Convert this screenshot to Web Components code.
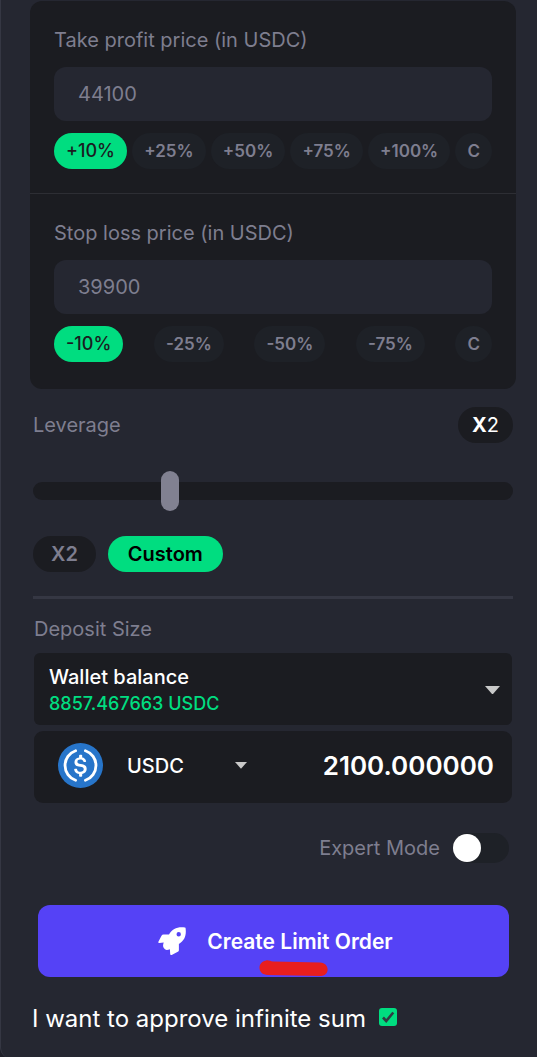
<!DOCTYPE html>
<html lang="en">
<head>
<meta charset="utf-8">
<meta name="viewport" content="width=device-width, initial-scale=1">
<title>Create Limit Order</title>
<style>
  html { background: #1f2029; }
  body {
    margin: 0;
    font-family: Inter, "Liberation Sans", sans-serif;
    font-size: 20px;
    color: #fff;
    --panel: #252731;
    --card: #1b1c21;
    --chip: #1e2127;
    --muted: #7e7e8f;
    --line: #353743;
    --green: #00dd80;
    --accent: #5542f6;
  }
</style>
</head>
<body>
<order-panel></order-panel>

<script>
const define = (name, html, setup) => {
  const template = document.createElement('template');
  template.innerHTML = '<style>*{box-sizing:border-box}button,input,select{font:inherit;color:inherit;margin:0;border:0;background:none}</style>' + html;
  customElements.define(name, class extends HTMLElement {
    constructor() {
      super();
      this.attachShadow({ mode: 'open' }).append(template.content.cloneNode(true));
    }
    connectedCallback() {
      if (setup) setup(this.shadowRoot, this);
    }
  });
};

define('chip-button', `
<style>
  :host { display: block; }
  button {
    display: block; height: 36px; padding: 0 12px; border-radius: 18px;
    background: var(--chip); color: var(--muted);
    font-size: 17px; line-height: 36px; font-weight: 600; white-space: nowrap; cursor: pointer;
  }
  :host([active]) button { background: var(--green); color: #1b1c21; font-size: 18px; font-weight: 500; }
  :host([large]) button { padding: 0 18px; font-size: 20px; font-weight: 600; background: var(--card); }
  :host([large][active]) button { padding: 0 20px; color: #000; background: var(--green); }
</style>
<button type="button"><slot></slot></button>`);

define('price-field', `
<style>
  :host { display: flex; flex-direction: column; gap: 12px; padding: 24px; }
  label { line-height: 30px; color: var(--muted); }
  input {
    width: 100%; height: 54px; padding: 0 24px; border-radius: 12px;
    background: var(--panel); color: var(--muted);
  }
  .chips { display: flex; justify-content: space-between; }
</style>
<label for="price"></label>
<input id="price" type="text" inputmode="decimal">
<div class="chips"><slot></slot></div>`, (root, host) => {
  root.querySelector('label').textContent = host.getAttribute('label');
  root.querySelector('input').value = host.getAttribute('value');
});

define('leverage-control', `
<style>
  :host { display: block; padding: 18px 3px 24px; }
  .head { display: flex; align-items: center; justify-content: space-between; }
  label { color: var(--muted); }
  output { height: 36px; padding: 0 14px; border-radius: 18px; background: var(--card); line-height: 36px; }
  b { font-weight: 700; }
  input {
    appearance: none; display: block; width: 100%; height: 40px; margin: 28px 0 25px; cursor: pointer;
  }
  input::-webkit-slider-runnable-track { height: 18px; border-radius: 9px; background: var(--card); }
  input::-webkit-slider-thumb {
    appearance: none; width: 18px; height: 40px; margin-top: -11px; border-radius: 9px; background: #818191;
  }
  .chips { display: flex; gap: 12px; }
</style>
<div class="head"><label for="lev">Leverage</label><output for="lev"><b>X</b>2</output></div>
<input id="lev" type="range" min="0" max="1000" value="277">
<div class="chips"><chip-button large>X2</chip-button><chip-button large active>Custom</chip-button></div>`);

define('caret-icon', `
<style>:host { display: block; } svg { display: block; width: 100%; }</style>
<svg viewBox="0 0 14 8" aria-hidden="true"><path d="M0 0h14L7 8z" fill="#c9c9c9"/></svg>`);

define('usdc-icon', `
<style>:host { display: block; width: 45px; height: 45px; } svg { display: block; }</style>
<svg width="45" height="45" viewBox="0 0 32 32" aria-hidden="true">
  <circle cx="16" cy="16" r="16" fill="#2775ca"/>
  <path fill="#fff" d="M20.4 18.5c0-2.3-1.4-3.1-4.2-3.5-2-.3-2.4-.8-2.4-1.7s.7-1.5 2-1.5c1.2 0 1.900.4 2.200 1.400.1.200.3.300.5.300h1c.3 0 .5-.2.5-.5v-.1c-.3-1.400-1.400-2.500-2.800-2.600V8.800c0-.3-.2-.5-.6-.5h-1c-.3 0-.5.2-.6.5v1.500c-2 .3-3.300 1.600-3.300 3.200 0 2.200 1.300 3.100 4.100 3.400 1.900.3 2.500.7 2.500 1.800s-1 1.800-2.200 1.800c-1.700 0-2.300-.7-2.500-1.700-.1-.3-.3-.4-.5-.4H12c-.3 0-.5.2-.5.5v.1c.3 1.600 1.300 2.700 3.500 3v1.500c0 .3.2.5.6.5h1c.3 0 .5-.2.6-.5V22c2-.3 3.200-1.700 3.200-3.500z"/>
  <g fill="none" stroke="#fff" stroke-width="2" stroke-linecap="round"><path d="M12.500 5.500a11.100 11.100 0 0 0 0 21"/><path d="M19.500 5.500a11.100 11.100 0 0 1 0 21"/></g>
</svg>`);

define('deposit-form', `
<style>
  :host { display: flex; flex-direction: column; gap: 6px; padding: 15px 4px 0; }
  h2 { margin: 0 0 3px; color: var(--muted); font-size: 20px; line-height: 30px; font-weight: 400; }
  .wallet {
    display: flex; align-items: center; justify-content: space-between; height: 72px;
    padding: 2px 12px 0 15px; border-radius: 6px; background: var(--card); text-align: left; cursor: pointer;
  }
  .wallet span { display: block; font-weight: 500; line-height: 28px; }
  .wallet .sum { color: var(--green); font-size: 18px; line-height: 26px; }
  .wallet caret-icon { width: 15px; }
  .amount {
    display: flex; align-items: center; height: 72px; padding: 0 18px 3px 24px;
    border-radius: 9px; background: var(--card);
  }
  .token { display: grid; align-items: center; width: 120px; margin-left: 24px; }
  .token > * { grid-area: 1 / 1; }
  .token caret-icon { width: 12px; justify-self: end; pointer-events: none; }
  select { appearance: none; width: 100%; padding: 0; font-weight: 500; line-height: 30px; cursor: pointer; }
  option { background: #1b1c21; }
  input { flex: 1; min-width: 0; padding: 0; text-align: right; font-size: 26px; line-height: 36px; font-weight: 600; }
</style>
<h2>Deposit Size</h2>
<button class="wallet" type="button" aria-haspopup="listbox">
  <span><span>Wallet balance</span><span class="sum">8857.467663 USDC</span></span>
  <caret-icon></caret-icon>
</button>
<div class="amount">
  <usdc-icon></usdc-icon>
  <div class="token"><select aria-label="Token"><option>USDC</option></select><caret-icon></caret-icon></div>
  <input type="text" inputmode="decimal" aria-label="Deposit amount" value="2100.000000">
</div>`);

define('expert-toggle', `
<style>
  :host { display: flex; justify-content: flex-end; padding: 30px 7px 42px; }
  label { display: flex; align-items: center; gap: 13px; color: var(--muted); cursor: pointer; }
  input {
    appearance: none; display: flex; align-items: center; width: 56px; height: 30px;
    border-radius: 15px; background: var(--chip);
  }
  input::before { content: ""; width: 28px; height: 28px; border-radius: 14px; background: #fff; }
  input:checked { justify-content: flex-end; background: var(--green); }
</style>
<label>Expert Mode<input type="checkbox" role="switch"></label>`);

define('submit-button', `
<style>
  :host { display: block; padding: 0 7px 0 8px; }
  button {
    position: relative; display: flex; align-items: center; justify-content: center; gap: 21px;
    width: 100%; height: 72px; padding: 0 0 0 4px; border-radius: 12px;
    background: var(--accent); color: #fff; font-size: 21px; font-weight: 600; cursor: pointer;
  }
  .rocket { display: block; width: 28px; height: 28px; }
  .mark { position: absolute; left: 47%; bottom: 1px; width: 69px; height: 16px; }
</style>
<button type="submit">
  <svg class="rocket" viewBox="0 0 28 28" aria-hidden="true">
    <path fill="#fff" fill-rule="evenodd" d="M27 .5C19.500-.4 14.500 1.500 11 7.500L5.500 7.600C4.600 7.600 4 8 3.500 8.800L.4 14.700C0 15.600.4 16.200 1.300 16.100L5.700 15.600C4.800 18.500 4.800 20 6 21.200L7 22.200C8.200 23.400 9.800 23 11.900 22.200L12.200 27C12.200 27.900 12.900 28.200 13.700 27.900L19.800 24.800C20.600 24.400 20.900 23.800 20.900 23L20.900 17C26.800 13.500 28.500 8.500 27.600 1.200C27.600.8 27.400.5 27 .5ZM20.700 5.100A2.200 2.200 0 1 1 20.700 9.500A2.200 2.200 0 1 1 20.700 5.100Z"/>
  </svg>
  <slot></slot>
  <svg class="mark" viewBox="0 0 69 16" aria-hidden="true"><path d="M7 .5C10-.2 11 1.500 14 1.500L61 2.500C71 3 71 15.500 62 16L9 15C-2 15-2 2 7 .5Z" fill="#e81e1e"/></svg>
</button>`);

define('approve-check', `
<style>
  :host { display: block; padding: 25px 2px 23px; }
  label { display: flex; align-items: center; gap: 13px; font-size: 24px; line-height: 34px; cursor: pointer; }
  .box { display: grid; width: 18px; height: 18px; margin-bottom: 4px; }
  .box > * { grid-area: 1 / 1; width: 18px; height: 18px; }
  input { appearance: none; border-radius: 3px; background: #3b3d48; }
  input:checked { background: var(--green); }
  svg { pointer-events: none; }
  input:not(:checked) + svg { visibility: hidden; }
</style>
<label>I want to approve infinite sum<span class="box"><input type="checkbox" checked><svg viewBox="0 0 18 18" aria-hidden="true"><path d="M4 9.500L7.200 13L14.300 4.500" fill="none" stroke="#303c42" stroke-width="2.600"/></svg></span></label>`);

define('order-panel', `
<style>
  :host { display: block; padding: 1px 21px 0 29px; border: 1px solid var(--line); border-width: 0 0 0 1px; border-radius: 0 0 0 12px; background: var(--panel); }
  .card { border-radius: 12px; background: var(--card); padding-bottom: 3px; }
  .card > * + * { border-top: 1px solid #2d2e34; }
  hr { height: 3px; margin: 0 3px; border: 0; background: var(--line); }
</style>
<form>
  <div class="card">
    <price-field label="Take profit price (in USDC)" value="44100">
      <chip-button active>+10%</chip-button><chip-button>+25%</chip-button><chip-button>+50%</chip-button><chip-button>+75%</chip-button><chip-button>+100%</chip-button><chip-button>C</chip-button>
    </price-field>
    <price-field label="Stop loss price (in USDC)" value="39900">
      <chip-button active>-10%</chip-button><chip-button>-25%</chip-button><chip-button>-50%</chip-button><chip-button>-75%</chip-button><chip-button>C</chip-button>
    </price-field>
  </div>
  <leverage-control></leverage-control>
  <hr>
  <deposit-form></deposit-form>
  <expert-toggle></expert-toggle>
  <submit-button>Create Limit Order</submit-button>
  <approve-check></approve-check>
</form>`);
</script>
</body>
</html>
